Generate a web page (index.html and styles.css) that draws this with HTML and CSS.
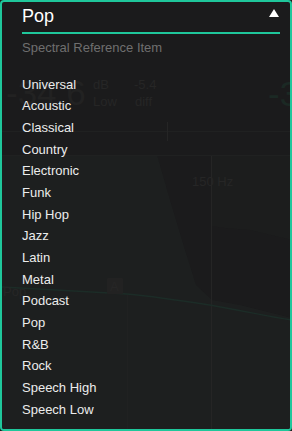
FILE: index.html
```html
<!DOCTYPE html>
<html>
<head>
<meta charset="utf-8">
<link rel="stylesheet" href="styles.css">
</head>
<body>
<div class="panel">
  <svg class="backdrop" width="288" height="427" viewBox="2 2 288 427" aria-hidden="true">
    <polygon class="area" points="0,155 157,155 170,200 185,250 196,285 212,300 240,305 292,318 292,431 0,431"/>
    <polygon class="area2" points="211,156 292,156 292,240 250,230 225,228 211,226"/>
    <line class="grid" x1="0" y1="131.5" x2="292" y2="131.5"/>
    <line class="grid" x1="0" y1="155.5" x2="292" y2="155.5"/>
    <line class="tick" x1="167.5" y1="122" x2="167.5" y2="141"/>
    <line class="tick" x1="211.5" y1="156" x2="211.5" y2="431"/>
    <line class="grid" x1="127.5" y1="295" x2="127.5" y2="431"/>
    <path class="curve" d="M0,287 C40,289 90,292 127,294 C160,297 190,302 215,306 C250,312 270,317 292,320"/>
    <text class="big" x="6" y="105">-34.6</text>
    <text class="small" x="93" y="89">dB</text>
    <text class="small" x="93" y="106">Low</text>
    <text class="small" x="134" y="89">-5.4</text>
    <text class="small" x="135" y="106">diff</text>
    <text class="big teal" x="268" y="106">-3</text>
    <text class="small" x="192" y="186">150 Hz</text>
    <text class="small" x="3" y="296">Pop</text>
    <rect class="badge" x="107" y="278" width="16" height="16" rx="1"/>
    <text class="small" x="110" y="291">A</text>
  </svg>
  <div class="head">
    <span class="title">Pop</span>
    <svg class="caret" width="10" height="8" viewBox="0 0 10 8"><polygon points="5,0 10,8 0,8" fill="#ffffff"/></svg>
  </div>
  <div class="subtitle">Spectral Reference Item</div>
  <ul class="list">
    <li>Universal</li>
    <li>Acoustic</li>
    <li>Classical</li>
    <li>Country</li>
    <li>Electronic</li>
    <li>Funk</li>
    <li>Hip Hop</li>
    <li>Jazz</li>
    <li>Latin</li>
    <li>Metal</li>
    <li>Podcast</li>
    <li>Pop</li>
    <li>R&amp;B</li>
    <li>Rock</li>
    <li>Speech High</li>
    <li>Speech Low</li>
  </ul>
</div>
</body>
</html>
```
FILE: styles.css
```css
html, body {
  margin: 0;
  padding: 0;
  background: #1b1b1b;
}
body {
  width: 292px;
  height: 431px;
  overflow: hidden;
  font-family: "Liberation Sans", Arial, sans-serif;
}
.panel {
  position: relative;
  box-sizing: border-box;
  width: 292px;
  height: 431px;
  border: 2px solid #1fc79b;
  border-radius: 4px;
  background: #1b1b1c;
  padding: 2.75px 10px 0 20px;
  overflow: hidden;
}
.backdrop {
  position: absolute;
  left: 0;
  top: 0;
  z-index: 0;
}
.backdrop .area { fill: #1d1f1f; }
.backdrop .area2 { fill: #1c1d1d; }
.backdrop .grid { stroke: #202121; stroke-width: 1; }
.backdrop .tick { stroke: #252525; stroke-width: 1; }
.backdrop .curve { stroke: #1c2c27; stroke-width: 1.5; fill: none; }
.backdrop .big { font-family: "Liberation Sans", Arial, sans-serif; font-size: 35px; fill: #222222; }
.backdrop .big.teal { fill: #1b2924; }
.backdrop .small { font-family: "Liberation Sans", Arial, sans-serif; font-size: 13px; fill: #262626; }
.backdrop .badge { fill: #222222; }
.head, .subtitle, .list {
  position: relative;
  z-index: 1;
}
.head {
  display: flex;
  justify-content: space-between;
  align-items: center;
  border-bottom: 2px solid #1fc79b;
  padding-bottom: 5.25px;
}
.title {
  color: #ffffff;
  font-size: 18px;
  line-height: 22px;
}
.caret {
  display: block;
  margin-right: 1px;
  margin-top: -5px;
}
.subtitle {
  color: #6f6f6f;
  font-size: 13px;
  line-height: 16px;
  margin-top: 5.5px;
}
.list {
  list-style: none;
  margin: 18.2px 0 0 0;
  padding: 0;
}
.list li {
  color: #ececec;
  font-size: 13px;
  line-height: 21.67px;
  height: 21.67px;
}
```
